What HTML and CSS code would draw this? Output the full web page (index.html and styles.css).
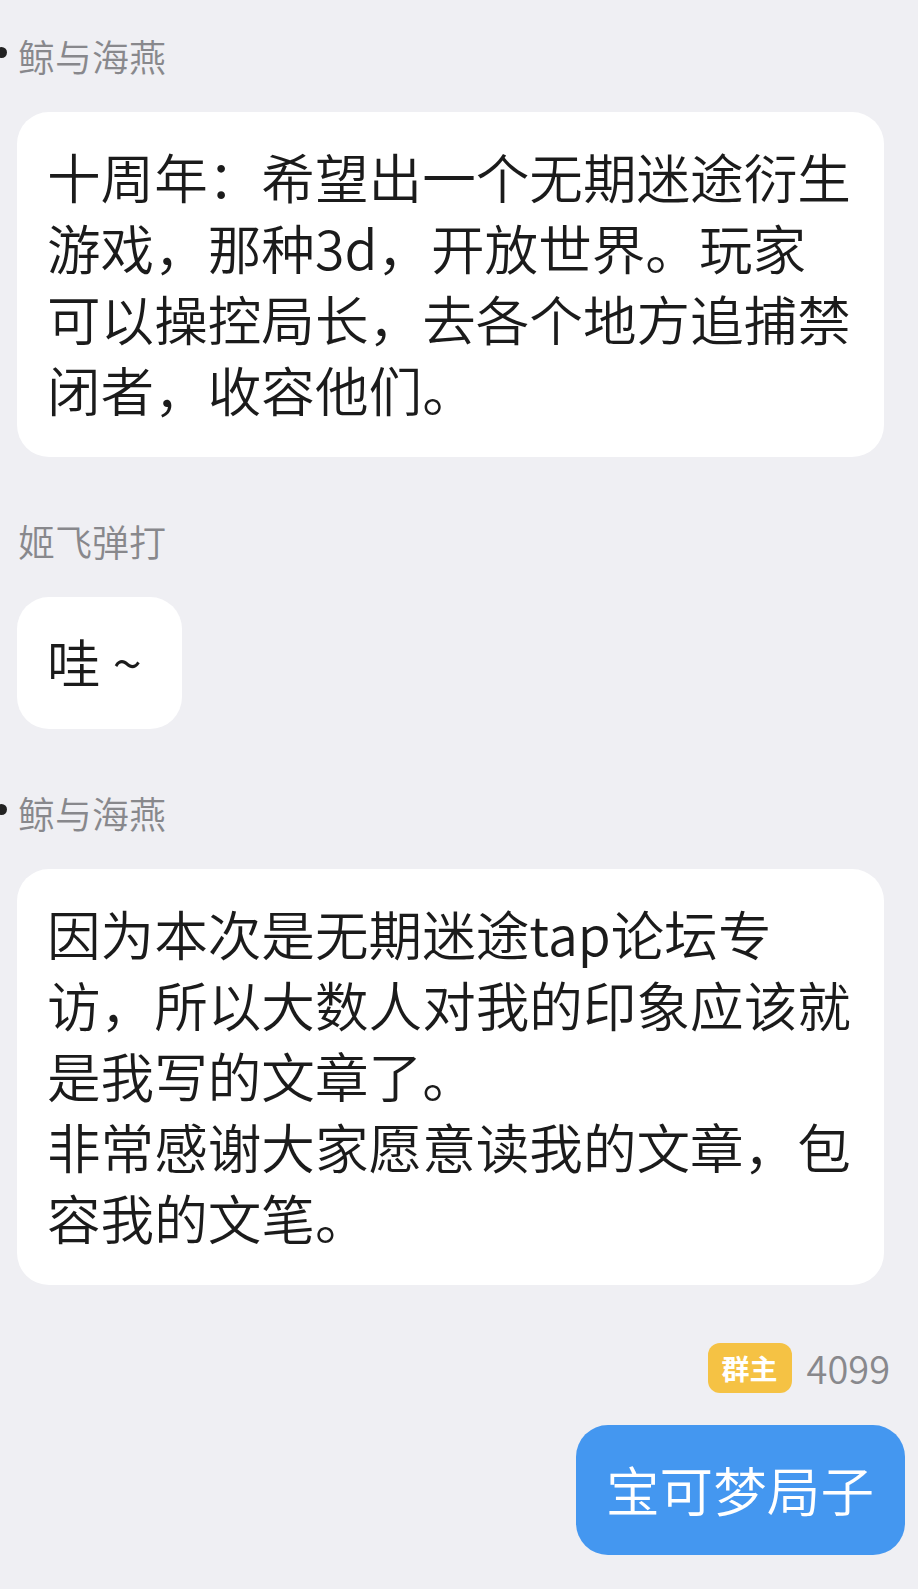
FILE: index.html
```html
<!DOCTYPE html>
<html lang="zh-CN">
<head>
    <meta charset="UTF-8">
    <meta name="viewport" content="width=device-width, initial-scale=1.0">
    <title>群聊</title>
    <link rel="stylesheet" href="styles.css">
</head>
<body>

<div class="chat">
    <div class="msg">
        <div class="name"><span class="dot"></span>鲸与海燕</div>
        <div class="bubble">十周年：希望出一个无期迷途衍生游戏，那种3d，开放世界。玩家可以操控局长，去各个地方追捕禁闭者，收容他们。</div>
    </div>

    <div class="msg">
        <div class="name">姬飞弹打</div>
        <div class="bubble short">哇 ~</div>
    </div>

    <div class="msg">
        <div class="name"><span class="dot"></span>鲸与海燕</div>
        <div class="bubble">因为本次是无期迷途tap论坛专访，所以大数人对我的印象应该就是我写的文章了。<br>非常感谢大家愿意读我的文章，包容我的文笔。</div>
    </div>

    <!-- 自己发的消息 -->
    <div class="msg self">
        <div class="self-head">
            <span class="badge">群主</span>
            <span class="uid">4099</span>
        </div>
        <div class="bubble blue">宝可梦局子</div>
    </div>
</div>

</body>
</html>
```

FILE: styles.css
```css
body {
    margin: 0;
    padding: 0;
    background-color: #efeff3;
    font-family: "Noto Sans CJK SC", "Noto Sans", sans-serif;
    color: #1b1b1b;
}

.chat {
    padding: 34px 0 20px;
}

.msg {
    display: flex;
    flex-direction: column;
    align-items: flex-start;
    margin-bottom: 62px;
}

.name {
    position: relative;
    font-size: 37px;
    font-weight: 350;
    line-height: 44px;
    color: #88888c;
    padding-left: 18px;
    margin-bottom: 34px;
}

.dot {
    position: absolute;
    left: -4px;
    top: 13px;
    width: 11px;
    height: 11px;
    border-radius: 50%;
    background: #222;
}

.bubble {
    background-color: #fff;
    border-radius: 32px;
    margin-left: 17px;
    width: 807px;
    padding: 28px 30px 33px;
    font-size: 53.6px;
    font-weight: 350;
    line-height: 71px;
}

.bubble.short {
    width: auto;
    padding-right: 40px;
}

.msg.self {
    align-items: flex-end;
    margin-top: -4px;
}

.self-head {
    display: flex;
    align-items: center;
    gap: 15px;
    height: 50px;
    padding-right: 28px;
    margin-bottom: 32px;
}

.badge {
    background-color: #f5c244;
    color: #fff;
    font-size: 28px;
    font-weight: bold;
    line-height: 50px;
    padding: 0 14px;
    border-radius: 12px;
}

.uid {
    font-size: 38px;
    font-weight: 350;
    color: #88888c;
    line-height: 50px;
}

.bubble.blue {
    width: auto;
    background-color: #4497f0;
    color: #fff;
    margin-left: 0;
    margin-right: 13px;
    padding: 28px 31px 31px 30px;
}
```
